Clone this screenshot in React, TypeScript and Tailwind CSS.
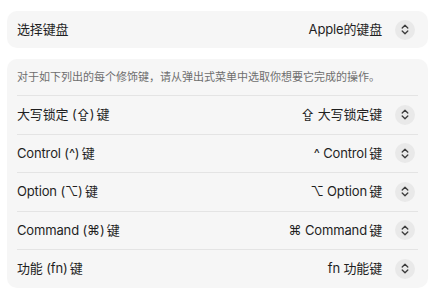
import React from "react";

const FONT = {
  fontFamily:
    '"Inter", "Noto Sans CJK SC", "DejaVu Sans", sans-serif',
};

function Stepper() {
  return (
    <div className="h-5 w-5 shrink-0 rounded-full bg-[#e9e9e9] flex items-center justify-center mr-[3px]">
      <svg width="8" height="11" viewBox="0 0 8 11" fill="none">
        <path d="M1.2 4 L4 1.3 L6.8 4" stroke="#3a3a3a" strokeWidth="1.3" strokeLinecap="round" strokeLinejoin="round" />
        <path d="M1.2 7 L4 9.7 L6.8 7" stroke="#3a3a3a" strokeWidth="1.3" strokeLinecap="round" strokeLinejoin="round" />
      </svg>
    </div>
  );
}

const ROWS = [
  { label: "大写锁定 (⇪)\u2009键", value: "⇪ 大写锁定键" },
  { label: "Control (^)\u2009键", value: "^ Control\u2009键" },
  { label: "Option (⌥)\u2009键", value: "⌥ Option\u2009键" },
  { label: "Command (⌘)\u2009键", value: "⌘ Command\u2009键" },
  { label: "功能 (fn)\u2009键", value: "fn 功能键" },
];

export default function App() {
  return (
    <div className="w-[439px] h-[299px] bg-white text-[#1f1f1f] pt-[11px] pl-[7px] tracking-[-0.15px]" style={FONT}>
      {/* Keyboard select */}
      <div className="w-[421px] h-[37px] rounded-[10px] bg-[#f6f6f6] px-[10px] flex items-center">
        <span className="text-[13px]">选择键盘</span>
        <span className="ml-auto text-[13px] mr-[13px]">Apple的键盘</span>
        <Stepper />
      </div>

      {/* Modifier keys */}
      <div className="mt-[11px] w-[421px] rounded-[10px] bg-[#f6f6f6] px-[10px]">
        <div className="h-[36px] flex items-center text-[11px] text-[#6e6e6e] tracking-normal">
          对于如下列出的每个修饰键，请从弹出式菜单中选取你想要它完成的操作。
        </div>
        {ROWS.map((r) => (
          <div key={r.label} className="h-[38.5px] border-t border-[#e4e4e4] flex items-center">
            <span className="text-[13px]">{r.label}</span>
            <span className="ml-auto text-[13px] mr-[13px]">{r.value}</span>
            <Stepper />
          </div>
        ))}
      </div>
    </div>
  );
}
